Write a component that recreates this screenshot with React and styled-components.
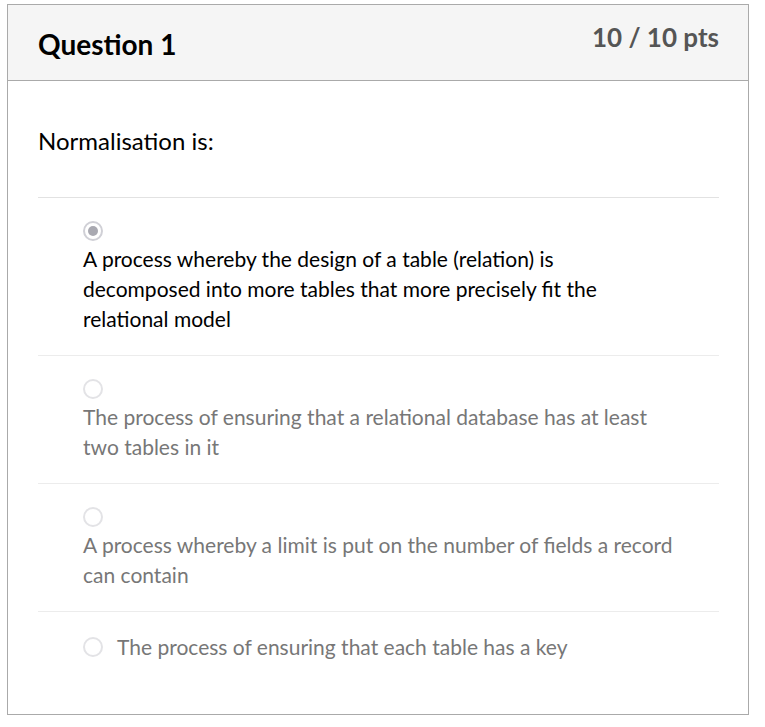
import React from "react";
import styled, { createGlobalStyle } from "styled-components";

const Global = createGlobalStyle`
  html, body { margin: 0; padding: 0; background: #fff; }
  body { font-family: Lato, "Liberation Sans", sans-serif; }
`;

const Page = styled.div`
  padding: 4px 0 0 7px;
`;

const Card = styled.section`
  width: 740px;
  height: 709px;
  border: 1px solid #aaaaaa;
  background: #fff;
`;

const Header = styled.header`
  display: flex;
  justify-content: space-between;
  align-items: flex-start;
  height: 76px;
  box-sizing: border-box;
  background: #f5f5f5;
  border-bottom: 1px solid #aaaaaa;
  padding: 0 29px 0 30px;
`;

const Title = styled.h2`
  margin: 0;
  padding-top: 23px;
  font-size: 28px;
  line-height: 32px;
  font-weight: 700;
  color: #000;
`;

const Points = styled.div`
  padding-top: 16px;
  font-size: 26px;
  line-height: 32px;
  font-weight: 700;
  color: #555;
`;

const Body = styled.div`
  padding: 0 29px 0 30px;
`;

const Prompt = styled.p`
  margin: 0;
  padding: 45px 0 41px;
  font-size: 24px;
  line-height: 30px;
  color: #000;
  border-bottom: 1px solid #e2e2e2;
`;

const Answer = styled.div`
  display: flex;
  flex-direction: ${(p) => (p.$stacked ? "column" : "row")};
  align-items: ${(p) => (p.$stacked ? "flex-start" : "center")};
  gap: ${(p) => (p.$stacked ? "3px" : "14px")};
  padding: ${(p) => (p.$stacked ? "23px 0 21px 45px" : "20px 0 21px 45px")};
  border-bottom: ${(p) => (p.$last ? "none" : "1px solid #ececec")};
`;

const Radio = styled.span`
  flex: none;
  width: 20px;
  height: 20px;
  box-sizing: border-box;
  border-radius: 50%;
  border: 2px solid ${(p) => (p.$checked ? "#d0d0d6" : "#e3e3e6")};
  display: flex;
  align-items: center;
  justify-content: center;
  &::after {
    content: "";
    width: 10px;
    height: 10px;
    border-radius: 50%;
    background: #a9a9b1;
    display: ${(p) => (p.$checked ? "block" : "none")};
  }
`;

const AnswerText = styled.span`
  font-size: 21px;
  line-height: 30px;
  color: ${(p) => (p.$checked ? "#000" : "#777")};
`;

const answers = [
  {
    lines: [
      "A process whereby the design of a table (relation) is",
      "decomposed into more tables that more precisely fit the",
      "relational model",
    ],
    checked: true,
  },
  {
    lines: [
      "The process of ensuring that a relational database has at least",
      "two tables in it",
    ],
  },
  {
    lines: [
      "A process whereby a limit is put on the number of fields a record",
      "can contain",
    ],
  },
  { lines: ["The process of ensuring that each table has a key"] },
];

export default function App() {
  return (
    <>
      <Global />
      <Page>
        <Card>
          <Header>
            <Title>Question 1</Title>
            <Points>10 / 10 pts</Points>
          </Header>
          <Body>
            <Prompt>Normalisation is:</Prompt>
            {answers.map((a, i) => (
              <Answer
                key={i}
                $stacked={a.lines.length > 1}
                $last={i === answers.length - 1}
              >
                <Radio $checked={a.checked} />
                <AnswerText $checked={a.checked}>
                  {a.lines.map((l, j) => (
                    <React.Fragment key={j}>
                      {j > 0 && <br />}
                      {l}
                    </React.Fragment>
                  ))}
                </AnswerText>
              </Answer>
            ))}
          </Body>
        </Card>
      </Page>
    </>
  );
}
